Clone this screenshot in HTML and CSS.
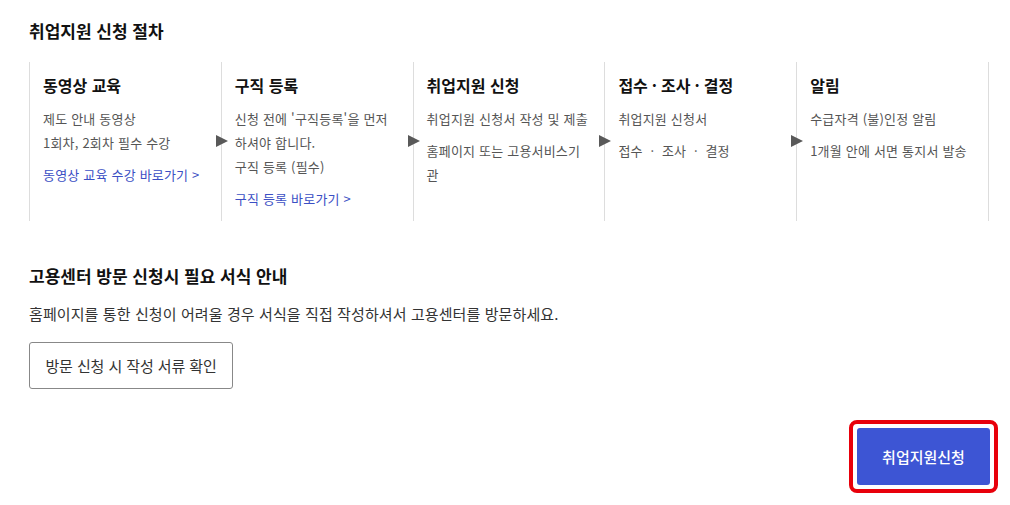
FILE: index.html
```html
<!DOCTYPE html>
<html lang="ko">
<head>
<meta charset="utf-8">
<link rel="stylesheet" href="styles.css">
</head>
<body>
<div class="page">
  <h2 class="sec-title">취업지원 신청 절차</h2>
  <div class="steps">
    <div class="step">
      <h3 class="step-title">동영상 교육</h3>
      <p class="step-text">제도 안내 동영상<br>1회차, 2회차 필수 수강</p>
      <a class="step-link" href="#">동영상 교육 수강 바로가기 &gt;</a>
    </div>
    <div class="step">
      <span class="arrow"></span>
      <h3 class="step-title">구직 등록</h3>
      <p class="step-text">신청 전에 '구직등록'을 먼저 하셔야 합니다.<br>구직 등록 (필수)</p>
      <a class="step-link" href="#">구직 등록 바로가기 &gt;</a>
    </div>
    <div class="step">
      <span class="arrow"></span>
      <h3 class="step-title">취업지원 신청</h3>
      <p class="step-text">취업지원 신청서 작성 및 제출</p>
      <p class="step-text">홈페이지 또는 고용서비스기관</p>
    </div>
    <div class="step">
      <span class="arrow"></span>
      <h3 class="step-title">접수<span class="dot">·</span>조사<span class="dot">·</span>결정</h3>
      <p class="step-text">취업지원 신청서</p>
      <p class="step-text">접수 &nbsp;· &nbsp;조사 &nbsp;· &nbsp;결정</p>
    </div>
    <div class="step">
      <span class="arrow"></span>
      <h3 class="step-title">알림</h3>
      <p class="step-text">수급자격 (불)인정 알림</p>
      <p class="step-text">1개월 안에 서면 통지서 발송</p>
    </div>
  </div>

  <h2 class="sec-title sec-title-2">고용센터 방문 신청시 필요 서식 안내</h2>
  <p class="desc">홈페이지를 통한 신청이 어려울 경우 서식을 직접 작성하셔서 고용센터를 방문하세요.</p>
  <button class="btn-outline" type="button">방문 신청 시 작성 서류 확인</button>

  <div class="actions">
    <div class="focus-ring">
      <button class="btn-primary" type="button">취업지원신청</button>
    </div>
  </div>
</div>
</body>
</html>
```
FILE: styles.css
```css
* { box-sizing: border-box; }
html, body { margin: 0; padding: 0; background: #fff; }
body {
  font-family: "Noto Sans CJK KR", "Noto Sans", sans-serif;
  color: #222;
}
.page {
  padding: 18px 22px 0 29px;
}
.sec-title {
  margin: 0;
  font-size: 17px;
  font-weight: 700;
  line-height: 26px;
  color: #111;
}
.steps {
  display: grid;
  grid-template-columns: repeat(5, 1fr);
  margin-top: 18px;
  width: 960px;
  border-right: 1px solid #ddd;
}
.step {
  position: relative;
  border-left: 1px solid #ddd;
  padding: 11px 14px 9px 13px;
  min-height: 159px;
}
.arrow {
  position: absolute;
  left: -6px;
  top: 73px;
  width: 0;
  height: 0;
  border-top: 6.5px solid transparent;
  border-bottom: 6.5px solid transparent;
  border-left: 12px solid #595959;
}
.step-title {
  margin: 0 0 10px;
  font-size: 16px;
  font-weight: 700;
  line-height: 24px;
  color: #111;
}
.step-title .dot {
  margin: 0 4px;
}
.step-text {
  margin: 0 0 8px;
  font-size: 13px;
  letter-spacing: 0.2px;
  line-height: 24px;
  color: #555;
}
.step-link {
  display: block;
  font-size: 13px;
  letter-spacing: 0.2px;
  line-height: 24px;
  color: #3b4fc4;
  text-decoration: none;
}
.sec-title-2 { margin-top: 42px; }
.desc {
  margin: 13px 0 16px;
  font-size: 15px;
  letter-spacing: 0.1px;
  line-height: 24px;
  color: #333;
}
.btn-outline {
  font-family: inherit;
  font-size: 15px;
  letter-spacing: -0.1px;
  color: #333;
  background: #fff;
  border: 1px solid #888;
  border-radius: 3px;
  height: 47px;
  width: 204px;
  padding: 0;
}
.actions {
  display: flex;
  justify-content: flex-end;
  margin-top: 31px;
  width: 969px;
}
.focus-ring {
  border: 4px solid #e8000b;
  border-radius: 8px;
  padding: 4px;
}
.btn-primary {
  display: block;
  font-family: inherit;
  font-size: 15px;
  font-weight: 500;
  color: #fff;
  background: #3d55d4;
  border: 0;
  border-radius: 3px;
  width: 133px;
  height: 57px;
}
```
